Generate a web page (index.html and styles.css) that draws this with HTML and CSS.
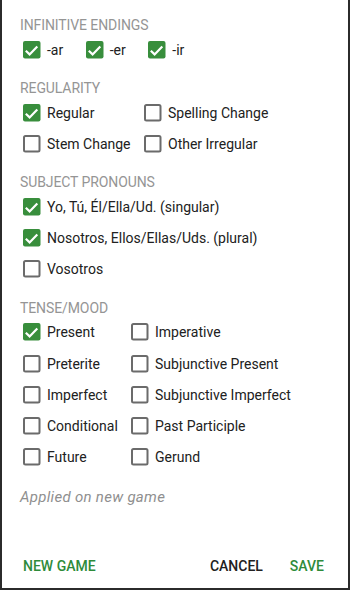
FILE: index.html
```html
<!DOCTYPE html>
<html>
<head>
<meta charset="utf-8">
<link rel="stylesheet" href="styles.css">
</head>
<body>
<div class="dialog">
  <div class="title first">INFINITIVE ENDINGS</div>
  <div class="row inline">
    <label class="opt"><svg class="cb" viewBox="0 0 24 24"><rect x="3" y="3" width="17.5" height="17.5" rx="2" class="on"/><polyline points="5.8,12.8 9.6,16.4 17.3,8.4" class="tick"/></svg><span>-ar</span></label>
    <label class="opt"><svg class="cb" viewBox="0 0 24 24"><rect x="3" y="3" width="17.5" height="17.5" rx="2" class="on"/><polyline points="5.8,12.8 9.6,16.4 17.3,8.4" class="tick"/></svg><span>-er</span></label>
    <label class="opt"><svg class="cb" viewBox="0 0 24 24"><rect x="3" y="3" width="17.5" height="17.5" rx="2" class="on"/><polyline points="5.8,12.8 9.6,16.4 17.3,8.4" class="tick"/></svg><span>-ir</span></label>
  </div>

  <div class="title">REGULARITY</div>
  <div class="grid reg">
    <label class="opt row"><svg class="cb" viewBox="0 0 24 24"><rect x="3" y="3" width="17.5" height="17.5" rx="2" class="on"/><polyline points="5.8,12.8 9.6,16.4 17.3,8.4" class="tick"/></svg><span>Regular</span></label>
    <label class="opt row"><svg class="cb" viewBox="0 0 24 24"><rect x="4" y="4" width="15.5" height="15.5" rx="1.5" class="off"/></svg><span>Spelling Change</span></label>
    <label class="opt row"><svg class="cb" viewBox="0 0 24 24"><rect x="4" y="4" width="15.5" height="15.5" rx="1.5" class="off"/></svg><span>Stem Change</span></label>
    <label class="opt row"><svg class="cb" viewBox="0 0 24 24"><rect x="4" y="4" width="15.5" height="15.5" rx="1.5" class="off"/></svg><span>Other Irregular</span></label>
  </div>

  <div class="title">SUBJECT PRONOUNS</div>
  <label class="opt row"><svg class="cb" viewBox="0 0 24 24"><rect x="3" y="3" width="17.5" height="17.5" rx="2" class="on"/><polyline points="5.8,12.8 9.6,16.4 17.3,8.4" class="tick"/></svg><span>Yo, Tú, Él/Ella/Ud. (singular)</span></label>
  <label class="opt row"><svg class="cb" viewBox="0 0 24 24"><rect x="3" y="3" width="17.5" height="17.5" rx="2" class="on"/><polyline points="5.8,12.8 9.6,16.4 17.3,8.4" class="tick"/></svg><span>Nosotros, Ellos/Ellas/Uds. (plural)</span></label>
  <label class="opt row"><svg class="cb" viewBox="0 0 24 24"><rect x="4" y="4" width="15.5" height="15.5" rx="1.5" class="off"/></svg><span>Vosotros</span></label>

  <div class="title">TENSE/MOOD</div>
  <div class="grid tense">
    <label class="opt row"><svg class="cb" viewBox="0 0 24 24"><rect x="3" y="3" width="17.5" height="17.5" rx="2" class="on"/><polyline points="5.8,12.8 9.6,16.4 17.3,8.4" class="tick"/></svg><span>Present</span></label>
    <label class="opt row"><svg class="cb" viewBox="0 0 24 24"><rect x="4" y="4" width="15.5" height="15.5" rx="1.5" class="off"/></svg><span>Imperative</span></label>
    <label class="opt row"><svg class="cb" viewBox="0 0 24 24"><rect x="4" y="4" width="15.5" height="15.5" rx="1.5" class="off"/></svg><span>Preterite</span></label>
    <label class="opt row"><svg class="cb" viewBox="0 0 24 24"><rect x="4" y="4" width="15.5" height="15.5" rx="1.5" class="off"/></svg><span>Subjunctive Present</span></label>
    <label class="opt row"><svg class="cb" viewBox="0 0 24 24"><rect x="4" y="4" width="15.5" height="15.5" rx="1.5" class="off"/></svg><span>Imperfect</span></label>
    <label class="opt row"><svg class="cb" viewBox="0 0 24 24"><rect x="4" y="4" width="15.5" height="15.5" rx="1.5" class="off"/></svg><span>Subjunctive Imperfect</span></label>
    <label class="opt row"><svg class="cb" viewBox="0 0 24 24"><rect x="4" y="4" width="15.5" height="15.5" rx="1.5" class="off"/></svg><span>Conditional</span></label>
    <label class="opt row"><svg class="cb" viewBox="0 0 24 24"><rect x="4" y="4" width="15.5" height="15.5" rx="1.5" class="off"/></svg><span>Past Participle</span></label>
    <label class="opt row"><svg class="cb" viewBox="0 0 24 24"><rect x="4" y="4" width="15.5" height="15.5" rx="1.5" class="off"/></svg><span>Future</span></label>
    <label class="opt row"><svg class="cb" viewBox="0 0 24 24"><rect x="4" y="4" width="15.5" height="15.5" rx="1.5" class="off"/></svg><span>Gerund</span></label>
  </div>

  <div class="note">Applied on new game</div>

  <div class="footer">
    <span class="btn green">NEW GAME</span>
    <span class="spacer"></span>
    <span class="btn dark">CANCEL</span>
    <span class="btn green save">SAVE</span>
  </div>
</div>
</body>
</html>
```

FILE: styles.css
```css
html, body {
  margin: 0;
  padding: 0;
  background: #ffffff;
}

body {
  font-family: Roboto, "Noto Sans", "Liberation Sans", sans-serif;
  font-size: 14px;
  color: #212121;
}

.dialog {
  width: 350px;
  height: 590px;
  box-sizing: border-box;
  border: 2px solid #2b2b2b;
  border-top: none;
  padding: 0 0 0 18px;
  display: flex;
  flex-direction: column;
  background: #ffffff;
}

.title {
  height: 18px;
  line-height: 18px;
  font-size: 14px;
  color: #959595;
  margin-top: 13.75px;
  letter-spacing: -0.1px;
}

.title.first {
  margin-top: 16px;
}

.row {
  height: 31.25px;
  display: flex;
  align-items: center;
}

.inline {
  gap: 19.5px;
}

.opt {
  display: flex;
  align-items: center;
  line-height: 20px;
  white-space: nowrap;
}

.opt span {
  margin-left: 3px;
}

.cb {
  width: 24px;
  height: 24px;
  flex: none;
  display: block;
}

.cb .on {
  fill: #388e3c;
}

.cb .off {
  fill: none;
  stroke: #6b6b6b;
  stroke-width: 2;
}

.cb .tick {
  fill: none;
  stroke: #ffffff;
  stroke-width: 2.2;
}

.grid {
  display: grid;
}

.grid.reg {
  grid-template-columns: 121px auto;
}

.grid.tense {
  grid-template-columns: 108px auto;
}

.note {
  margin-top: 13.5px;
  font-style: italic;
  font-size: 15px;
  line-height: 20px;
  color: #8f8f8f;
  letter-spacing: 0.3px;
}

.footer {
  margin-top: 49px;
  display: flex;
  align-items: center;
  padding-right: 24px;
  line-height: 20px;
}

.btn {
  font-weight: 500;
  font-size: 14px;
  letter-spacing: 0;
}

.btn.green {
  color: #2e8b3a;
}

.btn.dark {
  color: #212121;
}

.footer .btn:first-child {
  margin-left: 3px;
}

.spacer {
  flex: 1;
}

.save {
  margin-left: 27px;
}
```
